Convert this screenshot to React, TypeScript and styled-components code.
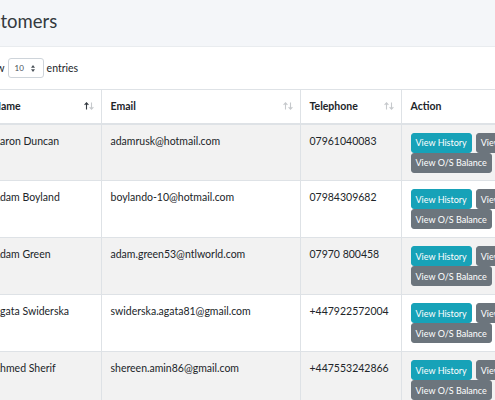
import React from 'react';
import styled, { createGlobalStyle } from 'styled-components';

const GlobalStyle = createGlobalStyle`
    body {
        margin: 0;
        background-color: #f4f6f9;
        font-family: Lato, "Open Sans", Arial, sans-serif;
        color: #212529;
        overflow: hidden;
    }
`;

const Page = styled.div`
    width: 640px;
    margin-left: -40px;
`;

const ContentHeader = styled.div`
    height: 46px;
    display: flex;
    align-items: center;
    padding-left: 10px;
`;

const Title = styled.h1`
    margin: 0;
    font-size: 18.5px;
    font-weight: 400;
    color: #343a40;
    padding-bottom: 4px;
`;

const Card = styled.div`
    background-color: #ffffff;
    border-top: 1px solid #e9ecef;
`;

const LengthRow = styled.div`
    height: 42px;
    display: flex;
    align-items: center;
    gap: 3px;
    padding-left: 19px;
    font-size: 10.5px;
`;

const SelectBox = styled.div`
    width: 36px;
    height: 20px;
    box-sizing: border-box;
    border: 1px solid #ced4da;
    border-radius: 3px;
    display: flex;
    align-items: center;
    justify-content: space-between;
    padding: 0 8px 0 6px;
    font-size: 8px;
    color: #495057;
`;

const Table = styled.table`
    width: 637px;
    border-collapse: collapse;
    table-layout: fixed;
    margin-left: 24px;
    font-size: 10.5px;
`;

const HeadCell = styled.th<{ $width: number }>`
    width: ${(p) => p.$width}px;
    height: 34px;
    box-sizing: border-box;
    padding: 0 7px 0 9px;
    text-align: left;
    font-weight: 700;
    border-top: 1px solid #dee2e6;
    border-bottom: 2px solid #dee2e6;
    border-left: 1px solid #dee2e6;
    &:first-child {
        border-left: none;
    }
`;

const HeadInner = styled.div`
    display: flex;
    align-items: center;
    justify-content: space-between;
`;

const SortIcons = styled.span`
    display: inline-flex;
    align-items: center;
`;

const Row = styled.tr<{ $striped: boolean }>`
    background-color: ${(p) => (p.$striped ? '#f2f2f2' : '#ffffff')};
`;

const Cell = styled.td`
    height: 57px;
    box-sizing: border-box;
    vertical-align: top;
    padding: 9px 8px 0 9px;
    line-height: 15px;
    border-top: 1px solid #dee2e6;
    border-left: 1px solid #dee2e6;
    &:first-child {
        border-left: none;
    }
`;

const ActionCell = styled(Cell)`
    padding-top: 8px;
`;

const Buttons = styled.div`
    display: flex;
    flex-wrap: wrap;
    column-gap: 4px;
    width: 180px;
`;

const Button = styled.span<{ $tone: 'info' | 'secondary' }>`
    display: inline-flex;
    align-items: center;
    height: 20px;
    box-sizing: border-box;
    padding: 0 4px;
    border-radius: 3px;
    font-size: 9px;
    white-space: nowrap;
    color: #ffffff;
    background-color: ${(p) => (p.$tone === 'info' ? '#17a2b8' : '#6c757d')};
    border: 1px solid ${(p) => (p.$tone === 'info' ? '#17a2b8' : '#6c757d')};
`;

type Customer = { name: string; email: string; phone: string };

const customers: Customer[] = [
    { name: 'Aaron Duncan', email: 'adamrusk@hotmail.com', phone: '07961040083' },
    { name: 'Adam Boyland', email: 'boylando-10@hotmail.com', phone: '07984309682' },
    { name: 'Adam Green', email: 'adam.green53@ntlworld.com', phone: '07970 800458' },
    { name: 'Agata Swiderska', email: 'swiderska.agata81@gmail.com', phone: '+447922572004' },
    { name: 'Ahmed Sherif', email: 'shereen.amin86@gmail.com', phone: '+447553242866' },
];

const ArrowIcon: React.FC<{ down?: boolean; color: string }> = ({ down, color }) => (
    <svg width="5" height="8" viewBox="0 0 5 8" fill="none" stroke={color} strokeWidth="1.1">
        {down ? (
            <path d="M2.5 0.5V7.2M0.6 5.2L2.5 7.2L4.4 5.2" />
        ) : (
            <path d="M2.5 7.5V0.8M0.6 2.8L2.5 0.8L4.4 2.8" />
        )}
    </svg>
);

const Sort: React.FC<{ active?: boolean }> = ({ active }) => (
    <SortIcons>
        <ArrowIcon color={active ? '#343a40' : '#c6c9cc'} />
        <ArrowIcon down color="#c6c9cc" />
    </SortIcons>
);

const App: React.FC = () => {
    return (
        <>
            <GlobalStyle />
            <Page>
                <ContentHeader>
                    <Title>Customers</Title>
                </ContentHeader>
                <Card>
                    <LengthRow>
                        Show
                        <SelectBox>
                            <span>10</span>
                            <svg width="4" height="7" viewBox="0 0 4 7" fill="#495057">
                                <path d="M0 2.8L2 0L4 2.8ZM0 4.2L2 7L4 4.2Z" />
                            </svg>
                        </SelectBox>
                        entries
                    </LengthRow>
                    <Table>
                        <thead>
                            <tr>
                                <HeadCell $width={117}>
                                    <HeadInner>
                                        Name <Sort active />
                                    </HeadInner>
                                </HeadCell>
                                <HeadCell $width={199}>
                                    <HeadInner>
                                        Email <Sort />
                                    </HeadInner>
                                </HeadCell>
                                <HeadCell $width={101}>
                                    <HeadInner>
                                        Telephone <Sort />
                                    </HeadInner>
                                </HeadCell>
                                <HeadCell $width={220}>Action</HeadCell>
                            </tr>
                        </thead>
                        <tbody>
                            {customers.map((c, i) => (
                                <Row key={c.email} $striped={i % 2 === 0}>
                                    <Cell>{c.name}</Cell>
                                    <Cell>{c.email}</Cell>
                                    <Cell>{c.phone}</Cell>
                                    <ActionCell>
                                        <Buttons>
                                            <Button $tone="info">View History</Button>
                                            <Button $tone="secondary">View Notes</Button>
                                            <Button $tone="secondary">View O/S Balance</Button>
                                            <Button $tone="secondary">Edit</Button>
                                        </Buttons>
                                    </ActionCell>
                                </Row>
                            ))}
                        </tbody>
                    </Table>
                </Card>
            </Page>
        </>
    );
};

export default App;
